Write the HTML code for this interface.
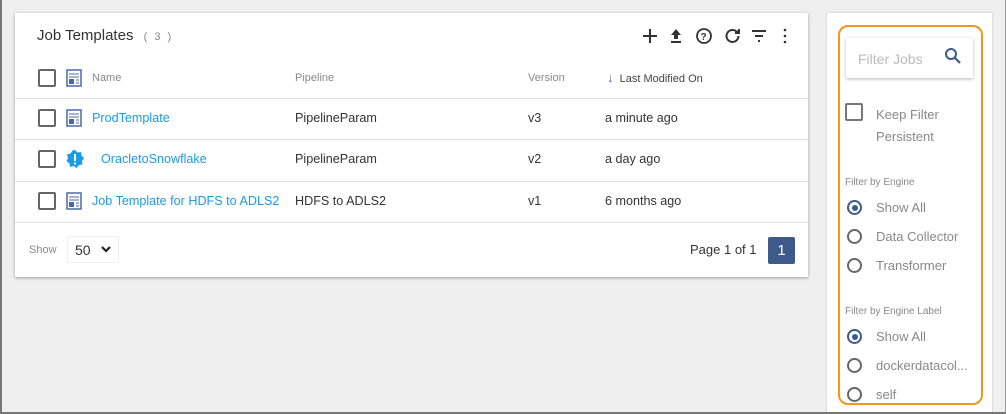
<!DOCTYPE html><html><head><style>
*{box-sizing:border-box;margin:0;padding:0}
body{width:1006px;height:414px;background:#efefef;font-family:"Liberation Sans",sans-serif;position:relative;overflow:hidden}
.a{position:absolute;white-space:nowrap}
.frame{position:absolute;left:0;top:0;width:1006px;height:414px;border-left:2px solid #777;border-bottom:2px solid #777;border-right:1px solid #999;pointer-events:none}
.card{position:absolute;left:15px;top:13px;width:793px;height:264px;background:#fff;box-shadow:0 1px 3px rgba(0,0,0,.35)}
.cb{position:absolute;width:18px;height:18px;border:2px solid #666;border-radius:2px}
.hr{position:absolute;left:0;width:793px;height:1px;background:#ddd}
.lnk{color:#1a9be6;font-size:12.6px}
.t{color:#333;font-size:12.6px}
.h{color:#888;font-size:11px}
.side{position:absolute;left:827px;top:13px;width:165px;height:401px;background:#fff;box-shadow:0 0 2px rgba(0,0,0,.2)}
.or{position:absolute;left:838px;top:25px;width:145px;height:380px;border:2px solid #f7941d;border-radius:10px}
.rad{position:absolute;width:15px;height:15px;border:2px solid #666;border-radius:50%}
.st{color:#888;font-size:13px}
</style></head><body>
<div class="card">
<div class="a" style="left:22px;top:14px;font-size:15px;color:#333">Job Templates <span style="font-size:11px;color:#888;letter-spacing:2px;margin-left:6px">( 3 )</span></div>
<svg class="a" style="left:626px;top:12px" width="160" height="22" viewBox="0 0 160 22" fill="none" stroke="#333" stroke-width="2">
<path d="M9 4v14M2 11h14"/>
<path d="M35 4l-5 6h3v4h4v-4h3z" fill="#333" stroke="none"/><path d="M30 17h10"/>
<circle cx="63" cy="11" r="7" stroke-width="1.8"/><text x="59.5" y="15" font-size="10" fill="#333" stroke="none" font-family="Liberation Sans" font-weight="bold">?</text>
<path d="M96 7a6 6 0 1 0 1.5 4"/><path d="M98 4v4h-4" fill="#333"/>
<path d="M111 6h14M114 11h8M117 16h2"/>
<circle cx="144" cy="5" r="1.3" fill="#333" stroke="none"/><circle cx="144" cy="11" r="1.3" fill="#333" stroke="none"/><circle cx="144" cy="17" r="1.3" fill="#333" stroke="none"/>
</svg>
<div class="cb" style="left:23px;top:56px"></div>
<svg class="a" style="left:51px;top:56px" width="16" height="18"><rect x="1" y="1" width="14" height="16" fill="none" stroke="#4a6aa8" stroke-width="1.5"/><path d="M3 5h10M3 8h10" stroke="#4a6aa8"/><rect x="3" y="10" width="5" height="5" fill="#4a6aa8"/><path d="M10 11h3M10 14h3" stroke="#4a6aa8"/></svg>
<div class="a h" style="left:77px;top:59px">Name</div>
<div class="a h" style="left:280px;top:59px">Pipeline</div>
<div class="a h" style="left:513px;top:59px">Version</div>
<div class="a" style="left:592px;top:57px;font-size:11px;color:#444"><span style="color:#4a6aa8;font-size:13px">↓</span>&nbsp; Last Modified On</div>
<div class="hr" style="top:85px"></div>
<div class="cb" style="left:23px;top:96px"></div>
<svg class="a" style="left:51px;top:96px" width="16" height="18"><rect x="1" y="1" width="14" height="16" fill="none" stroke="#4a6aa8" stroke-width="1.5"/><path d="M3 5h10M3 8h10" stroke="#4a6aa8"/><rect x="3" y="10" width="5" height="5" fill="#4a6aa8"/><path d="M10 11h3M10 14h3" stroke="#4a6aa8"/></svg>
<div class="a lnk" style="left:77px;top:98px">ProdTemplate</div>
<div class="a t" style="left:280px;top:98px">PipelineParam</div>
<div class="a t" style="left:513px;top:98px">v3</div>
<div class="a t" style="left:590px;top:98px">a minute ago</div>
<div class="hr" style="top:126px"></div>
<div class="cb" style="left:23px;top:137px"></div>
<svg class="a" style="left:51px;top:137px" width="18" height="18"><polygon points="9,0 11.5,2.5 15,2 15.5,5.5 18,8 16,11 16.5,14.5 13,15 10.5,18 7.5,16 4,17 3.5,13.5 0.5,11 2,8 1,4.5 4.5,3.5 6.5,0.5" fill="#1a9be6"/><rect x="8" y="4" width="2" height="7" fill="#fff"/><rect x="8" y="12.5" width="2" height="2" fill="#fff"/></svg>
<div class="a lnk" style="left:86px;top:139px">OracletoSnowflake</div>
<div class="a t" style="left:280px;top:139px">PipelineParam</div>
<div class="a t" style="left:513px;top:139px">v2</div>
<div class="a t" style="left:590px;top:139px">a day ago</div>
<div class="hr" style="top:168px"></div>
<div class="cb" style="left:23px;top:179px"></div>
<svg class="a" style="left:51px;top:179px" width="16" height="18"><rect x="1" y="1" width="14" height="16" fill="none" stroke="#4a6aa8" stroke-width="1.5"/><path d="M3 5h10M3 8h10" stroke="#4a6aa8"/><rect x="3" y="10" width="5" height="5" fill="#4a6aa8"/><path d="M10 11h3M10 14h3" stroke="#4a6aa8"/></svg>
<div class="a lnk" style="left:77px;top:181px">Job Template for HDFS to ADLS2</div>
<div class="a t" style="left:280px;top:181px">HDFS to ADLS2</div>
<div class="a t" style="left:513px;top:181px">v1</div>
<div class="a t" style="left:590px;top:181px">6 months ago</div>
<div class="hr" style="top:209px"></div>
<div class="a h" style="left:14px;top:231px">Show</div>
<div class="a" style="left:52px;top:223px;width:52px;height:27px;border:1px solid #eee;border-radius:2px"></div>
<div class="a t" style="left:60px;top:229px;font-size:14px">50</div>
<svg class="a" style="left:85px;top:232px" width="12" height="10"><path d="M2 2l4 4 4-4" fill="none" stroke="#222" stroke-width="2.2"/></svg>
<div class="a t" style="left:675px;top:229px;font-size:13px">Page 1 of 1</div>
<div class="a" style="left:753px;top:224px;width:27px;height:27px;background:#3d5a8a;color:#fff;font-size:15px;text-align:center;line-height:27px;border-radius:2px">1</div>
</div>
<div class="side"></div>
<div class="or"></div>
<div class="a" style="left:846px;top:38px;width:127px;height:40px;background:#fff;box-shadow:0 1px 3px rgba(0,0,0,.3)"></div>
<div class="a" style="left:858px;top:51px;font-size:14px;color:#bbb">Filter Jobs</div>
<svg class="a" style="left:944px;top:47px" width="18" height="18"><circle cx="7" cy="7" r="5" fill="none" stroke="#3d5a8a" stroke-width="2"/><path d="M11 11l5 5" stroke="#3d5a8a" stroke-width="2.2"/></svg>
<div class="cb" style="left:845px;top:103px;border-color:#777"></div>
<div class="a st" style="left:876px;top:104px;line-height:22px">Keep Filter<br>Persistent</div>
<div class="a" style="left:845px;top:177px;font-size:10px;color:#888">Filter by Engine</div>
<div class="rad" style="left:847px;top:200px;border-color:#3d5a8a"><div style="position:absolute;left:2.5px;top:2.5px;width:6px;height:6px;border-radius:50%;background:#3d5a8a"></div></div>
<div class="a st" style="left:876px;top:200px">Show All</div>
<div class="rad" style="left:847px;top:229px"></div>
<div class="a st" style="left:876px;top:229px">Data Collector</div>
<div class="rad" style="left:847px;top:258px"></div>
<div class="a st" style="left:876px;top:258px">Transformer</div>
<div class="a" style="left:845px;top:306px;font-size:10px;color:#888">Filter by Engine Label</div>
<div class="rad" style="left:847px;top:329px;border-color:#3d5a8a"><div style="position:absolute;left:2.5px;top:2.5px;width:6px;height:6px;border-radius:50%;background:#3d5a8a"></div></div>
<div class="a st" style="left:876px;top:329px">Show All</div>
<div class="rad" style="left:847px;top:358px"></div>
<div class="a st" style="left:876px;top:358px">dockerdatacol...</div>
<div class="rad" style="left:847px;top:387px"></div>
<div class="a st" style="left:876px;top:387px">self</div>
<div class="frame"></div>
</body></html>
